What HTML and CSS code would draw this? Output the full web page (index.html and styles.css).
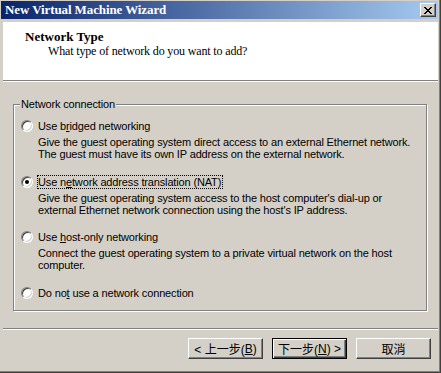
FILE: index.html
```
<!DOCTYPE html>
<html>
<head>
<meta charset="utf-8">
<link rel="stylesheet" href="styles.css">
</head>
<body>
<div class="window">
  <div class="titlebar">
    <span class="title">New Virtual Machine Wizard</span>
    <span class="close"><svg width="8" height="7" viewBox="0 0 8 7" shape-rendering="crispEdges"><path fill="#000" d="M0 0h2v1H0z M6 0h2v1H6z M1 1h2v1H1z M5 1h2v1H5z M2 2h4v1H2z M3 3h2v1H3z M2 4h4v1H2z M1 5h2v1H1z M5 5h2v1H5z M0 6h2v1H0z M6 6h2v1H6z"/></svg></span>
  </div>
  <div class="header">
    <div class="h-title">Network Type</div>
    <div class="h-sub">What type of network do you want to add?</div>
  </div>
  <div class="sep"></div>
  <div class="body">
    <fieldset class="group">
      <legend>Network connection</legend>
      <div class="opt">
        <div class="opt-row"><span class="radio"></span><span class="label">Use b<u>r</u>idged networking</span></div>
        <div class="desc">Give the guest operating system direct access to an external Ethernet network.<br>The guest must have its own IP address on the external network.</div>
      </div>
      <div class="opt">
        <div class="opt-row"><span class="radio checked"></span><span class="label focus">Use n<u>e</u>twork address translation (NAT)</span></div>
        <div class="desc">Give the guest operating system access to the host computer's dial-up or<br>external Ethernet network connection using the host's IP address.</div>
      </div>
      <div class="opt">
        <div class="opt-row"><span class="radio"></span><span class="label">Use <u>h</u>ost-only networking</span></div>
        <div class="desc">Connect the guest operating system to a private virtual network on the host<br>computer.</div>
      </div>
      <div class="opt">
        <div class="opt-row"><span class="radio"></span><span class="label">Do no<u>t</u> use a network connection</span></div>
      </div>
    </fieldset>
  </div>
  <div class="sep"></div>
  <div class="buttons">
    <span class="btn">&lt; 上一步(<u>B</u>)</span>
    <span class="btn default">下一步(<u>N</u>) &gt;</span>
    <span class="btn">取消</span>
  </div>
</div>
</body>
</html>
```

FILE: styles.css
```
html, body {
  margin: 0;
  padding: 0;
  background: #D4D0C8;
}
.window {
  width: 441px;
  height: 373px;
  box-sizing: border-box;
  padding: 1px 2px 3px 1px;
  display: flex;
  flex-direction: column;
  background: #D4D0C8;
  border-right: 1px solid #404040;
  border-bottom: 1px solid #404040;
  box-shadow: inset -1px -1px #808080;
  font-family: "Liberation Sans", Arial, sans-serif;
  font-size: 11px;
  letter-spacing: -0.15px;
  color: #000;
  white-space: nowrap;
}
.titlebar {
  height: 18px;
  flex: none;
  display: flex;
  align-items: center;
  justify-content: space-between;
  background: linear-gradient(to right, #0A246A, #A6CAF0);
  padding: 0 2px 0 4px;
}
.title {
  color: #fff;
  font-family: "Liberation Serif", serif;
  font-weight: bold;
  font-size: 13px;
  letter-spacing: -0.1px;
}
.close {
  width: 16px;
  height: 14px;
  box-sizing: border-box;
  background: #D4D0C8;
  border: 1px solid;
  border-color: #fff #404040 #404040 #fff;
  box-shadow: inset -1px -1px #808080;
  display: flex;
  align-items: center;
  justify-content: center;
  padding-right: 1px;
}
.close svg { display: block; }
.header {
  flex: none;
  margin: 3px 0 0 2px;
  height: 58px;
  box-sizing: border-box;
  background: #fff;
  padding: 7px 0 0 22px;
  font-family: "Liberation Serif", serif;
  font-size: 13px;
  line-height: 15px;
  letter-spacing: 0;
}
.h-title { font-weight: bold; }
.h-sub { padding-left: 23px; font-size: 12px; letter-spacing: -0.15px; }
.sep {
  flex: none;
  height: 2px;
  box-sizing: border-box;
  margin-left: 2px;
  border-top: 1px solid #808080;
  border-bottom: 1px solid #fff;
}
.body {
  flex: none;
  padding: 16px 11px 0 12px;
  height: 246px;
  box-sizing: border-box;
}
.group {
  margin: 0;
  height: 213px;
  box-sizing: border-box;
  border: 1px solid #808080;
  box-shadow: inset 1px 1px #fff, 1px 1px #fff;
  padding: 8px 6px 0 7px;
}
.group legend {
  padding: 0 1px;
  margin-left: -1px;
  line-height: 13px;
  background: #D4D0C8;
}
.opt { margin-bottom: 14.5px; }
.opt-row {
  display: flex;
  align-items: center;
  height: 14px;
}
.radio {
  width: 12px;
  height: 12px;
  box-sizing: border-box;
  border-radius: 50%;
  background: #fff;
  border: 1px solid;
  border-color: #808080 #fff #fff #808080;
  box-shadow: inset 1px 1px #404040, inset -1px -1px #D4D0C8;
  display: flex;
  align-items: center;
  justify-content: center;
  flex: none;
}
.radio.checked::after {
  content: "";
  width: 4px;
  height: 4px;
  border-radius: 50%;
  background: #000;
}
.label {
  margin-left: 4px;
  border: 1px dotted transparent;
  line-height: 12px;
  padding: 0 1px 0 0;
}
.label.focus { border-color: #000; }
.desc {
  margin-top: 3px;
  padding-left: 17px;
  line-height: 12px;
}
.buttons {
  flex: none;
  display: flex;
  justify-content: flex-end;
  gap: 9px;
  padding: 8px 7px 0 0;
}
.btn {
  width: 75px;
  height: 21px;
  box-sizing: border-box;
  display: flex;
  align-items: center;
  justify-content: center;
  font-family: "Liberation Sans", "Noto Sans CJK TC", sans-serif;
  font-size: 12px;
  letter-spacing: 0;
  border: 1px solid;
  border-color: #fff #404040 #404040 #fff;
  box-shadow: inset -1px -1px #808080;
}
.btn.default {
  border: 1px solid #000;
  box-shadow: inset 1px 1px #fff, inset -1px -1px #404040, inset -2px -2px #808080;
}
```
